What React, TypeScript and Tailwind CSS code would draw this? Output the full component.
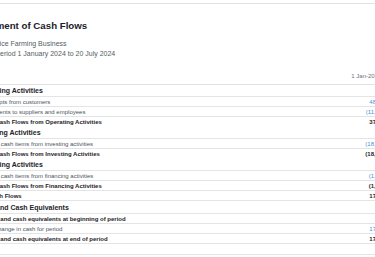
import React from 'react'

type RowKind = 'section' | 'item' | 'total' | 'summary' | 'bold' | 'blank'

interface ReportRow {
  kind: RowKind
  label?: string
  value?: string
  link?: boolean
  last?: boolean
}

const rows: ReportRow[] = [
  { kind: 'section', label: 'Operating Activities' },
  { kind: 'item', label: 'Receipts from customers', value: '48,962.50', link: true },
  { kind: 'item', label: 'Payments to suppliers and employees', value: '(11,482.35)', link: true },
  { kind: 'total', label: 'Net Cash Flows from Operating Activities', value: '37,480.15' },
  { kind: 'section', label: 'Investing Activities' },
  { kind: 'item', label: 'Other cash items from investing activities', value: '(18,350.00)', link: true },
  { kind: 'total', label: 'Net Cash Flows from Investing Activities', value: '(18,350.00)' },
  { kind: 'section', label: 'Financing Activities' },
  { kind: 'item', label: 'Other cash items from financing activities', value: '(1,540.00)', link: true },
  { kind: 'total', label: 'Net Cash Flows from Financing Activities', value: '(1,540.00)' },
  { kind: 'summary', label: 'Net Cash Flows', value: '17,590.15' },
  { kind: 'section', label: 'Cash and Cash Equivalents' },
  { kind: 'bold', label: 'Cash and cash equivalents at beginning of period', value: '0.00' },
  { kind: 'item', label: 'Net change in cash for period', value: '17,590.15', link: true },
  { kind: 'bold', label: 'Cash and cash equivalents at end of period', value: '17,590.15', last: true },
  { kind: 'blank' },
]

function Row({ row, first }: { row: ReportRow; first: boolean }) {
  if (row.kind === 'section') {
    return (
      <div
        className={`${first ? 'h-[11px]' : 'h-[12px]'} flex items-center pl-[5px] text-[7px] font-bold leading-none text-[#1e2429] whitespace-nowrap`}
      >
        {row.label}
      </div>
    )
  }

  if (row.kind === 'blank') {
    return <div className="h-[11px] border-b border-[#e4e4e4]" />
  }

  if (row.kind === 'summary') {
    return (
      <div className="h-[11px] flex items-center justify-between border-y border-[#e4e4e4] pl-[5px] pr-[6px] text-[6px] font-bold leading-none text-[#1e2429] whitespace-nowrap">
        <span>{row.label}</span>
        <span>{row.value}</span>
      </div>
    )
  }

  const isBold = row.kind === 'total' || row.kind === 'bold'

  return (
    <div
      className={`${row.last ? 'h-[11px] border-y' : 'h-[10px] border-t'} flex items-center justify-between border-[#e4e4e4] pl-[12px] pr-[6px] text-[6px] leading-none whitespace-nowrap ${
        isBold ? 'font-bold text-[#1e2429]' : 'text-[#4a5560]'
      }`}
    >
      <span>{row.label}</span>
      <span className={row.link ? 'text-[#3a94dc]' : 'text-[#1e2429]'}>{row.value}</span>
    </div>
  )
}

export default function App() {
  return (
    <div className="h-[257px] w-[375px] overflow-hidden bg-white pt-[3px] font-['Liberation_Sans',Arial,sans-serif]">
      <div className="-ml-[28px] w-[430px]">
        {/* Report header */}
        <div className="border-y border-[#e2e2e2] pt-[16px] pb-[3px]">
          <h1 className="text-[9.7px] font-bold leading-[12px] text-[#1b2126] whitespace-nowrap">
            Statement of Cash Flows
          </h1>
          <p className="mt-[7px] text-[7px] leading-[10px] text-[#555d64] whitespace-nowrap">
            My Practice Farming Business
          </p>
          <p className="text-[7px] leading-[10px] text-[#555d64] whitespace-nowrap">
            For the period 1 January 2024 to 20 July 2024
          </p>
          <div className="mt-[12px] flex justify-end pr-[3px] text-[6px] leading-[10px] text-[#6b7278] whitespace-nowrap">
            1 Jan-20 Jul 2024
          </div>
        </div>

        {/* Report body */}
        <div>
          {rows.map((row, i) => (
            <Row key={i} row={row} first={i === 0} />
          ))}
        </div>
      </div>
    </div>
  )
}
